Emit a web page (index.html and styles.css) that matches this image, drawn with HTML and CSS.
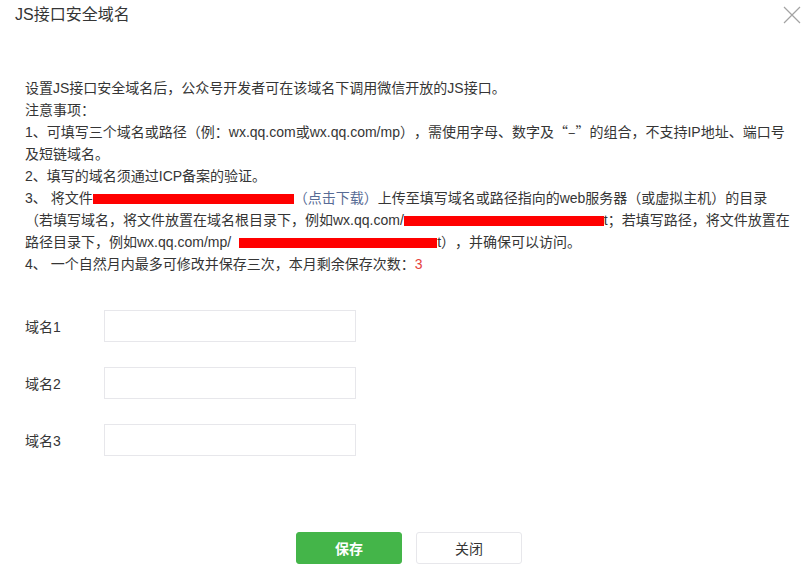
FILE: index.html
```html
<!DOCTYPE html>
<html lang="zh-CN">
<head>
    <meta charset="UTF-8">
    <title>JS接口安全域名</title>
    <link rel="stylesheet" href="styles.css">
</head>
<body>
    <div class="dialog">
        <div class="dialog-hd">
            <h3>JS接口安全域名</h3>
            <a class="close" href="javascript:;">
                <svg width="18" height="18" viewBox="0 0 18 18"><path d="M1 1L17 17M17 1L1 17" stroke="#a3a3a3" stroke-width="1.2" fill="none"/></svg>
            </a>
        </div>

        <div class="dialog-bd">
            <div class="tips">
                <p>设置JS接口安全域名后，公众号开发者可在该域名下调用微信开放的JS接口。</p>
                <p>注意事项：</p>
                <p>1、可填写三个域名或路径（例：wx.qq.com或wx.qq.com/mp），需使用字母、数字及<span class="cjk">“–”</span>的组合，不支持IP地址、端口号<br>及短链域名。</p>
                <p>2、填写的域名须通过ICP备案的验证。</p>
                <p>3、 将文件<span class="mask mask-a"></span><a href="javascript:;">（点击下载）</a>上传至填写域名或路径指向的web服务器（或虚拟主机）的目录<br>（若填写域名，将文件放置在域名根目录下，例如wx.qq.com/<span class="mask mask-b"></span>t；若填写路径，将文件放置在<br>路径目录下，例如wx.qq.com/mp/<span class="mask mask-c"></span>t），并确保可以访问。</p>
                <p>4、 一个自然月内最多可修改并保存三次，本月剩余保存次数：<em class="count">3</em></p>
            </div>

            <div class="form">
                <div class="form-row">
                    <label>域名1</label>
                    <input type="text">
                </div>
                <div class="form-row">
                    <label>域名2</label>
                    <input type="text">
                </div>
                <div class="form-row">
                    <label>域名3</label>
                    <input type="text">
                </div>
            </div>
        </div>

        <div class="dialog-ft">
            <button class="btn btn-primary">保存</button>
            <button class="btn btn-default">关闭</button>
        </div>
    </div>
</body>
</html>
```

FILE: styles.css
```css
html, body {
    margin: 0;
    padding: 0;
    overflow: hidden;
}
body {
    font-family: "Liberation Sans", "Noto Sans CJK SC", sans-serif;
    font-size: 14px;
    color: #353535;
    background: #fff;
    text-spacing-trim: space-all;
}
.dialog {
    width: 818px;
    height: 574px;
    position: relative;
}
.dialog-hd {
    height: 30px;
    padding: 0 15px;
}
.dialog-hd h3 {
    margin: 0;
    font-size: 16px;
    font-weight: normal;
    line-height: 30px;
}
.close {
    position: absolute;
    top: 6px;
    left: 783px;
    display: block;
    width: 18px;
    height: 18px;
}
.close svg {
    display: block;
}
.dialog-bd {
    padding: 47px 25px 0;
}
.tips p {
    margin: 0;
    line-height: 22px;
    white-space: nowrap;
}
.tips a {
    color: #576b95;
    text-decoration: none;
}
.cjk {
    font-family: "Noto Sans CJK SC", sans-serif;
    line-height: 1;
}
.mask {
    display: inline-block;
    height: 10px;
    background: #ff0000;
    vertical-align: -1px;
}
.mask-a {
    width: 201px;
}
.mask-b {
    width: 200px;
}
.mask-c {
    width: 198px;
    margin-left: 8px;
}
.count {
    font-style: normal;
    color: #e64340;
}
.form {
    margin-top: 35px;
}
.form-row {
    display: flex;
    align-items: center;
    margin-bottom: 25px;
}
.form-row label {
    width: 79px;
}
.form-row input {
    width: 252px;
    height: 32px;
    box-sizing: border-box;
    border: 1px solid #e7e7eb;
    padding: 0 10px;
    font-size: 14px;
    outline: none;
}
.dialog-ft {
    display: flex;
    justify-content: center;
    gap: 14px;
    padding-top: 51px;
}
.btn {
    width: 106px;
    height: 32px;
    border-radius: 3px;
    font-size: 14px;
    font-family: inherit;
    cursor: pointer;
}
.btn-primary {
    background: #44b549;
    border: 1px solid #44b549;
    color: #fff;
    font-weight: bold;
}
.btn-default {
    background: #fff;
    border: 1px solid #e7e7eb;
    color: #353535;
}
```
